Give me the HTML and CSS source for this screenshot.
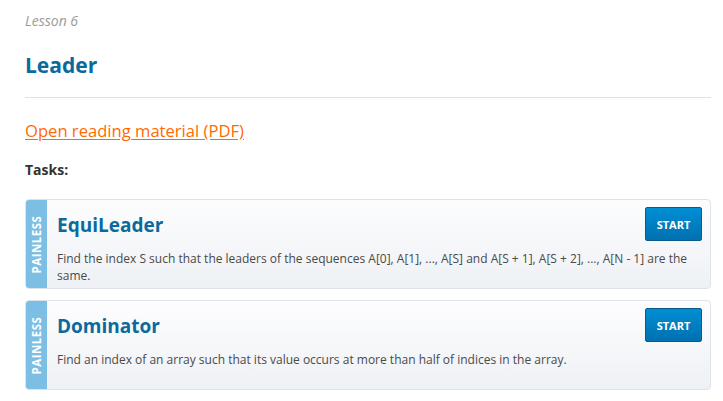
FILE: index.html
```html
<!DOCTYPE html>
<html>
<head>
<meta charset="utf-8">
<link rel="stylesheet" href="styles.css">
</head>
<body>
<div class="page">
  <div class="lesson">Lesson 6</div>
  <h1 class="title">Leader</h1>
  <hr class="rule">
  <a class="pdf" href="#">Open reading material (PDF)</a>
  <div class="tasks-label">Tasks:</div>
  <div class="tasks">
    <div class="card">
      <div class="stripe"><span>PAINLESS</span></div>
      <div class="body">
        <div class="head">
          <h2 class="name">EquiLeader</h2>
          <button class="start">START</button>
        </div>
        <p class="desc">Find the index S such that the leaders of the sequences A[0], A[1], ..., A[S] and A[S + 1], A[S + 2], ..., A[N - 1] are the same.</p>
      </div>
    </div>
    <div class="card">
      <div class="stripe"><span>PAINLESS</span></div>
      <div class="body">
        <div class="head">
          <h2 class="name">Dominator</h2>
          <button class="start">START</button>
        </div>
        <p class="desc">Find an index of an array such that its value occurs at more than half of indices in the array.</p>
      </div>
    </div>
  </div>
</div>
</body>
</html>
```
FILE: styles.css
```css
* { box-sizing: border-box; }
html, body { margin: 0; padding: 0; background: #fff; }
body { font-family: "Open Sans", "Noto Sans", sans-serif; color: #444; }
.page { padding: 12px 12px 0 25px; width: 723px; }
.lesson { font-style: italic; font-size: 14px; color: #9a9a9a; line-height: 18px; }
.title { margin: 22px 0 0; font-size: 21px; line-height: 26px; font-weight: 700; color: #0a6a9e; }
.rule { margin: 19px 0 0; border: 0; border-top: 1px solid #dde3e8; height: 0; }
.pdf { display: inline-block; margin-top: 22px; font-size: 16.6px; line-height: 22px; color: #ff6a00; text-decoration: underline; text-underline-offset: 2px; }
.tasks-label { margin-top: 19px; font-size: 14px; font-weight: 700; color: #333; line-height: 18px; }
.tasks { margin-top: 20px; display: flex; flex-direction: column; gap: 11px; }
.card { display: flex; border: 1px solid #dde3e8; border-radius: 4px; overflow: hidden; background: linear-gradient(#fdfdfe, #eef1f5); height: 90px; }
.stripe { width: 21px; flex: none; background: #7dbee5; display: flex; align-items: center; justify-content: center; }
.stripe span { transform: rotate(-90deg); color: #fff; font-weight: 700; font-size: 11.5px; letter-spacing: 0.5px; white-space: nowrap; }
.body { flex: 1; padding: 7px 8px 0 10px; }
.head { display: flex; justify-content: space-between; align-items: flex-start; }
.name { margin: 5px 0 0; font-size: 19px; line-height: 26px; font-weight: 700; color: #0a6a9e; }
.start { width: 57px; height: 34px; margin-top: 0; border: 1px solid #0b5a8a; border-radius: 2px; background: linear-gradient(#008fd4, #0070b0); color: #fff; font-family: inherit; font-weight: 700; font-size: 11px; padding: 0; }
.desc { margin: 9px 0 0; font-size: 12px; line-height: 17px; color: #4a4a4a; padding-right: 10px; }
```
